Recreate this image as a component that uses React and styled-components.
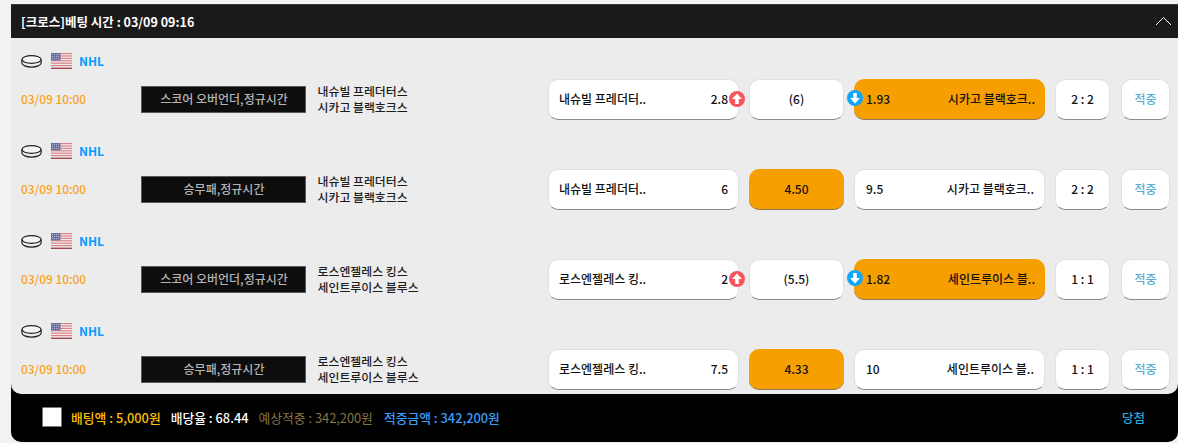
import React from "react";
import styled, { createGlobalStyle } from "styled-components";

const Global = createGlobalStyle`
  html, body { margin: 0; padding: 0; background: #efefef; }
  body { font-family: "Noto Sans CJK KR", "Noto Sans", sans-serif; font-size: 12px; }
`;

const Page = styled.div`
  width: 1178px;
  height: 443px;
  box-sizing: border-box;
  padding: 4px 0 1px 11px;
  display: flex;
  flex-direction: column;
  overflow: hidden;
  background: #f2f2f2;
`;

const Header = styled.div`
  height: 34px;
  flex: none;
  box-sizing: border-box;
  background: #1a1a1a;
  border-top: 1px solid #3a3a3a;
  display: flex;
  align-items: center;
  justify-content: space-between;
  padding: 0 6px 1px 10px;
  color: #fff;
  font-size: 12.5px;
  font-weight: 700;
`;

const Shell = styled.div`
  flex: 1;
  min-height: 0;
  display: flex;
  flex-direction: column;
  background: #000;
  border-radius: 0 0 10px 10px;
`;

const Body = styled.div`
  height: 356px;
  flex: none;
  box-sizing: border-box;
  background: #ececec;
  border-radius: 0 0 10px 10px;
  padding-top: 14px;
  overflow: hidden;
`;

const Block = styled.div`
  height: 90px;
  display: flex;
  flex-direction: column;
`;

const League = styled.div`
  height: 18px;
  display: flex;
  align-items: center;
  padding: 0 0 2px 10px;
  box-sizing: border-box;
  gap: 7px;
  color: #0a9bff;
  font-size: 12px;
  font-weight: 700;
`;

const LeagueIcon = styled.span`
  display: flex;
  margin: 2px 0 0 ${(p) => p.$ml || 0}px;
`;

const Row = styled.div`
  margin-top: 9px;
  height: 41px;
  display: flex;
  align-items: center;
  padding-left: 10px;
`;

const Time = styled.div`
  width: 120px;
  flex: none;
  color: #f9a11b;
  font-size: 11.9px;
  font-weight: 500;
  padding-bottom: 2px;
`;

const Market = styled.div`
  width: 165px;
  height: 27px;
  flex: none;
  box-sizing: border-box;
  background: #0d0d0d;
  border: 1px solid #5a5a5a;
  color: #b4b4b4;
  font-size: 12px;
  font-weight: 500;
  padding: 0 0 2px 1px;
  display: flex;
  align-items: center;
  justify-content: center;
`;

const Teams = styled.div`
  width: 242px;
  flex: none;
  box-sizing: border-box;
  padding: 0 0 2px 11.5px;
  color: #1c1c1c;
  font-size: 11.9px;
  font-weight: 500;
  line-height: 16px;
`;

const Btn = styled.div`
  position: relative;
  height: 41px;
  width: ${(p) => p.$w}px;
  margin-right: ${(p) => p.$mr ?? 10}px;
  flex: none;
  box-sizing: border-box;
  border-radius: 10px;
  background: ${(p) => (p.$on ? "#f79e00" : "#fff")};
  border: ${(p) => (p.$on ? "0" : "1px solid #e0e0e0")};
  border-bottom: 1px solid ${(p) => (p.$on ? "#8d7a55" : "#8a8a8a")};
  color: ${(p) => p.$color || "#111"};
  font-size: 12px;
  font-weight: 500;
  display: flex;
  align-items: center;
  justify-content: ${(p) => (p.$between ? "space-between" : "center")};
  padding: 0 ${(p) => (p.$between ? "10px" : "0")} 2px ${(p) => p.$pl ?? (p.$between ? 10 : 0)}px;
`;

const Badge = styled.span`
  position: absolute;
  top: 11px;
  width: 16px;
  height: 16px;
  ${(p) => (p.$side === "right" ? "right: -7px;" : "left: -7px;")}
  display: flex;
  z-index: 1;
`;

const Footer = styled.div`
  flex: 1;
  display: flex;
  align-items: center;
  padding: 0 33px 2px 31px;
  font-size: 12.8px;
  font-weight: 500;
`;

const Check = styled.div`
  width: 20px;
  height: 20px;
  box-sizing: border-box;
  background: #fff;
  border: 1px solid #777;
  border-radius: 1px;
  margin-right: 9px;
`;

const Stat = styled.span`
  color: ${(p) => p.$c};
  margin-right: ${(p) => p.$mr}px;
  font-weight: ${(p) => p.$fw || 500};
`;

const Win = styled.span`
  margin-left: auto;
  color: #2aa7dc;
  font-size: 12.5px;
`;

const Puck = () => (
  <svg width="21" height="13" viewBox="0 0 21 13" fill="none" stroke="#222" strokeWidth="1.2">
    <ellipse cx="10.5" cy="4.5" rx="9.6" ry="3.8" fill="#f4f4f4" />
    <path d="M.9 4.5v3.6c0 2.2 4.3 4 9.6 4s9.6-1.8 9.6-4V4.5" />
  </svg>
);

const Flag = () => (
  <svg width="21" height="16" viewBox="0 0 21 16">
    <rect width="21" height="16" rx="1" fill="#f3eeee" />
    {[0, 2.4, 4.8, 7.2, 9.6, 12].map((y) => (
      <rect key={y} y={y} width="21" height="1.2" fill="#d98085" />
    ))}
    <rect y="14.6" width="21" height="1.4" fill="#9a4a4e" />
    <rect width="9.5" height="7.4" fill="#6a6f9f" />
    <path d="M1 1.5h8M1 3.5h8M1 5.5h8" stroke="#c4c7e2" strokeWidth=".8" strokeDasharray="1 1" />
  </svg>
);

const Arrow = ({ up }) => (
  <svg width="16" height="16" viewBox="0 0 16 16">
    <circle cx="8" cy="8" r="8" fill={up ? "#f7545c" : "#0fa7fb"} />
    <path
      d={up ? "M8 2.6 13 8H9.8V13H6.2V8H3Z" : "M8 13.4 13 8H9.8V3H6.2V8H3Z"}
      fill="#fff"
    />
  </svg>
);

const Chevron = () => (
  <svg width="17" height="10" viewBox="0 0 17 10" fill="none" stroke="#fff" strokeWidth="1">
    <path d="M1 9 8.5 1.5 16 9" />
  </svg>
);

const rows = [
  { market: "스코어 오버언더,정규시간", t1: "내슈빌 프레더터스", t2: "시카고 블랙호크스", a: "내슈빌 프레더터..", av: "2.8", mid: "(6)", b: "시카고 블랙호크..", bv: "1.93", score: "2 : 2", arrows: true },
  { market: "승무패,정규시간", t1: "내슈빌 프레더터스", t2: "시카고 블랙호크스", a: "내슈빌 프레더터..", av: "6", mid: "4.50", b: "시카고 블랙호크..", bv: "9.5", score: "2 : 2" },
  { market: "스코어 오버언더,정규시간", t1: "로스엔젤레스 킹스", t2: "세인트루이스 블루스", a: "로스엔젤레스 킹..", av: "2", mid: "(5.5)", b: "세인트루이스 블..", bv: "1.82", score: "1 : 1", arrows: true },
  { market: "승무패,정규시간", t1: "로스엔젤레스 킹스", t2: "세인트루이스 블루스", a: "로스엔젤레스 킹..", av: "7.5", mid: "4.33", b: "세인트루이스 블..", bv: "10", score: "1 : 1" },
];

export default function App() {
  return (
    <>
      <Global />
      <Page>
        <Header>
          <span>[크로스]베팅 시간 : 03/09 09:16</span>
          <Chevron />
        </Header>
        <Shell>
          <Body>
            {rows.map((r, i) => (
              <Block key={i}>
                <League>
                  <LeagueIcon>
                    <Puck />
                  </LeagueIcon>
                  <LeagueIcon $ml={2}>
                    <Flag />
                  </LeagueIcon>
                  <span>NHL</span>
                </League>
                <Row>
                  <Time>03/09 10:00</Time>
                  <Market>{r.market}</Market>
                  <Teams>
                    {r.t1}
                    <br />
                    {r.t2}
                  </Teams>
                  <Btn $w={191} $between>
                    <span>{r.a}</span>
                    <span>{r.av}</span>
                    {r.arrows && (
                      <Badge $side="right">
                        <Arrow up />
                      </Badge>
                    )}
                  </Btn>
                  <Btn $w={95} $on={!r.arrows}>
                    {r.mid}
                  </Btn>
                  <Btn $w={191} $between $on={r.arrows} $pl={r.arrows ? 12 : 11}>
                    {r.arrows && (
                      <Badge $side="left">
                        <Arrow />
                      </Badge>
                    )}
                    <span>{r.bv}</span>
                    <span>{r.b}</span>
                  </Btn>
                  <Btn $w={55} $mr={11}>
                    {r.score}
                  </Btn>
                  <Btn $w={49} $mr={0} $color="#56aed2">
                    적중
                  </Btn>
                </Row>
              </Block>
            ))}
          </Body>
          <Footer>
            <Check />
            <Stat $c="#ffc000" $mr={10}>배팅액 : 5,000원</Stat>
            <Stat $c="#fff" $mr={10}>배당율 : 68.44</Stat>
            <Stat $c="#8a7440" $mr={11} $fw={400}>예상적중 : 342,200원</Stat>
            <Stat $c="#3a9cf5" $mr={0}>적중금액 : 342,200원</Stat>
            <Win>당첨</Win>
          </Footer>
        </Shell>
      </Page>
    </>
  );
}
